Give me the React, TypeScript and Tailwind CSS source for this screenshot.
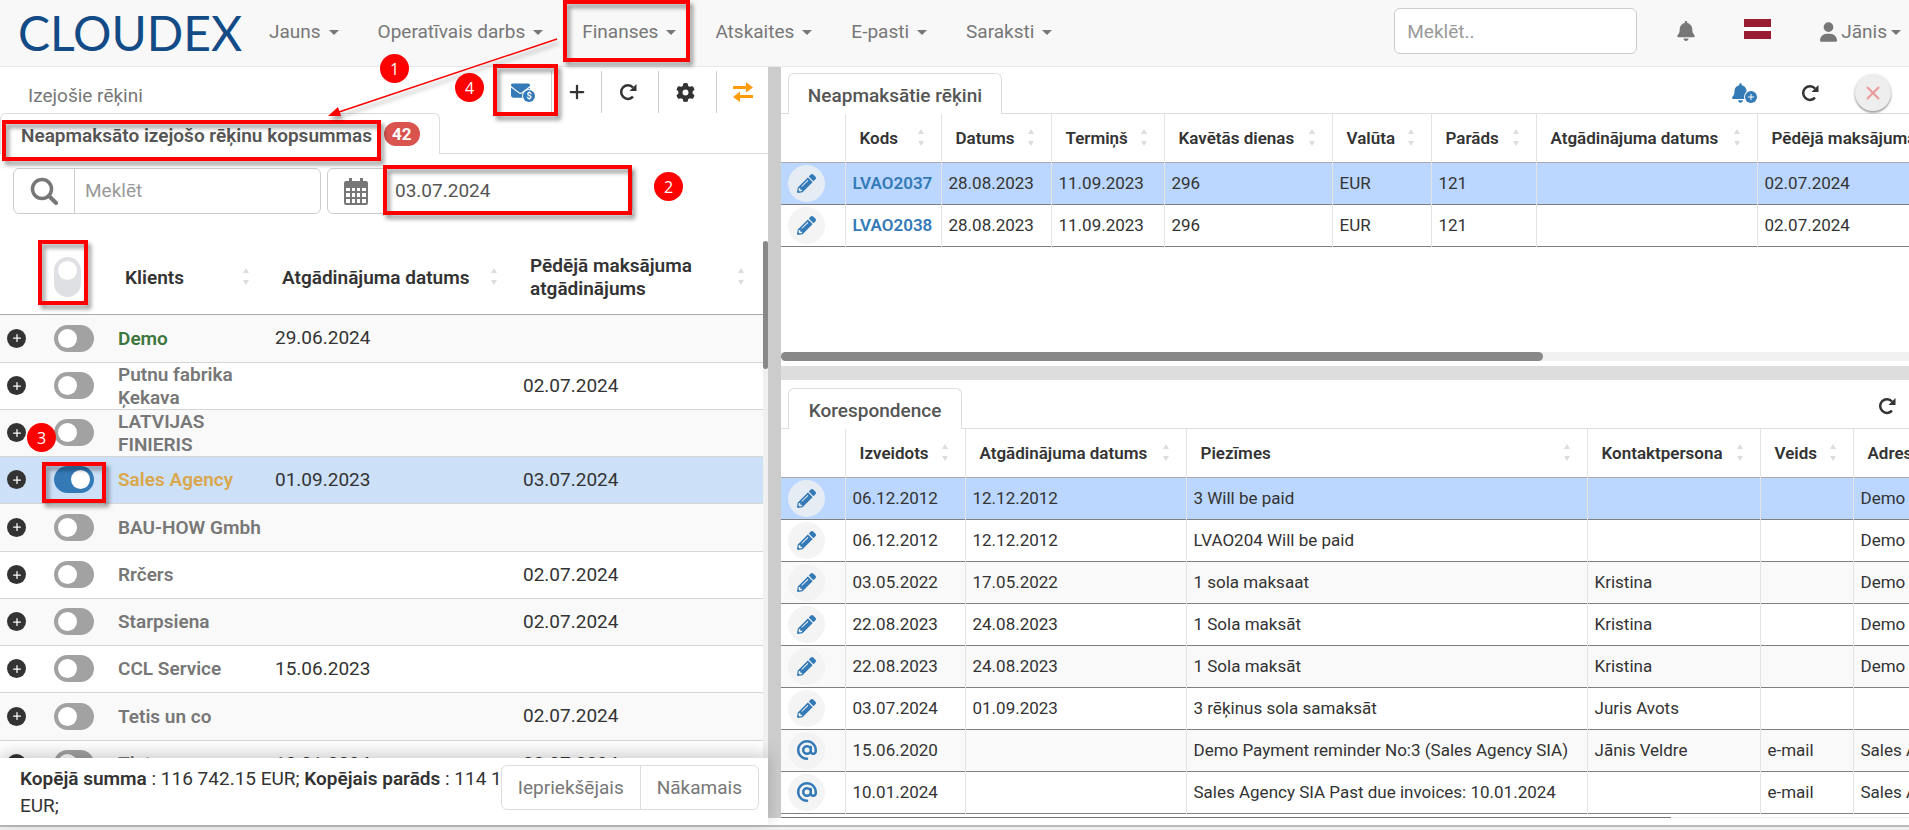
import { useState } from "react";
import { FaAt, FaBell, FaEnvelope, FaGear, FaPlus, FaUser } from "react-icons/fa6";
import { FaPencilAlt } from "react-icons/fa";
import { clsx } from "clsx";

interface Client {
  name: string;
  color: string;
  reminder: string;
  lastPayment: string;
}

interface Correspondence {
  kind: "note" | "mail";
  created: string;
  reminder: string;
  notes: string;
  contact: string;
  type: string;
  address: string;
}

const menu = ["Jauns", "Operatīvais darbs", "Finanses", "Atskaites", "E-pasti", "Saraksti"];

const clients: Client[] = [
  { name: "Demo", color: "text-[#3c763d]", reminder: "29.06.2024", lastPayment: "" },
  { name: "Putnu fabrika Ķekava", color: "text-[#777]", reminder: "", lastPayment: "02.07.2024" },
  { name: "LATVIJAS FINIERIS", color: "text-[#777]", reminder: "", lastPayment: "" },
  { name: "Sales Agency", color: "text-[#dba74c]", reminder: "01.09.2023", lastPayment: "03.07.2024" },
  { name: "BAU-HOW Gmbh", color: "text-[#777]", reminder: "", lastPayment: "" },
  { name: "Rrčers", color: "text-[#777]", reminder: "", lastPayment: "02.07.2024" },
  { name: "Starpsiena", color: "text-[#777]", reminder: "", lastPayment: "02.07.2024" },
  { name: "CCL Service", color: "text-[#777]", reminder: "15.06.2023", lastPayment: "" },
  { name: "Tetis un co", color: "text-[#777]", reminder: "", lastPayment: "02.07.2024" },
  { name: "Tieto", color: "text-[#777]", reminder: "10.01.2024", lastPayment: "02.07.2024" },
];

const invoices = [
  { code: "LVAO2037", date: "28.08.2023", due: "11.09.2023", late: "296", currency: "EUR", debt: "121", last: "02.07.2024" },
  { code: "LVAO2038", date: "28.08.2023", due: "11.09.2023", late: "296", currency: "EUR", debt: "121", last: "02.07.2024" },
];

const letters: Correspondence[] = [
  { kind: "note", created: "06.12.2012", reminder: "12.12.2012", notes: "3 Will be paid", contact: "", type: "", address: "Demo" },
  { kind: "note", created: "06.12.2012", reminder: "12.12.2012", notes: "LVAO204 Will be paid", contact: "", type: "", address: "Demo" },
  { kind: "note", created: "03.05.2022", reminder: "17.05.2022", notes: "1 sola maksaat", contact: "Kristina", type: "", address: "Demo" },
  { kind: "note", created: "22.08.2023", reminder: "24.08.2023", notes: "1 Sola maksāt", contact: "Kristina", type: "", address: "Demo" },
  { kind: "note", created: "22.08.2023", reminder: "24.08.2023", notes: "1 Sola maksāt", contact: "Kristina", type: "", address: "Demo" },
  { kind: "note", created: "03.07.2024", reminder: "01.09.2023", notes: "3 rēķinus sola samaksāt", contact: "Juris Avots", type: "", address: "" },
  { kind: "mail", created: "15.06.2020", reminder: "", notes: "Demo Payment reminder No:3 (Sales Agency SIA)", contact: "Jānis Veldre", type: "e-mail", address: "Sales Agency" },
  { kind: "mail", created: "10.01.2024", reminder: "", notes: "Sales Agency SIA Past due invoices: 10.01.2024", contact: "", type: "e-mail", address: "Sales Agency" },
];

function Caret() {
  return <span className="border-x-5 border-t-5 border-x-transparent border-t-current" />;
}

function SortArrows() {
  return (
    <svg viewBox="0 0 8 18" className="h-[18px] w-2 shrink-0 fill-[#ddd]" aria-hidden="true">
      <path d="M1 5 4 0l3 5zM1 12h6l-3 5z" />
    </svg>
  );
}

function ReloadIcon() {
  return (
    <svg viewBox="0 0 18 18" className="size-[18px] fill-none stroke-current" aria-hidden="true">
      <path d="M14 4.500A6.800 6.800 0 1 0 14 13.700" strokeWidth="2.500" />
      <path d="M17.500 1v7h-7z" className="fill-current stroke-none" />
    </svg>
  );
}

function CalendarIcon() {
  return (
    <svg viewBox="0 0 24 27" className="h-[27px] w-6 fill-current" aria-hidden="true">
      <path d="M5 0h3v3h8V0h3v3h3a2 2 0 0 1 2 2v4H0V5a2 2 0 0 1 2-2h3z" />
      <path
        fillRule="evenodd"
        d="M0 9h24v16a2 2 0 0 1-2 2H2a2 2 0 0 1-2-2zM2 10v3h4v-3zM8 10v3h3v-3zM13 10v3h3v-3zM18 10v3h4v-3zM2 15v4h4v-4zM8 15v4h3v-4zM13 15v4h3v-4zM18 15v4h4v-4zM2 21v4h4v-4zM8 21v4h3v-4zM13 21v4h3v-4zM18 21v4h4v-4z"
      />
    </svg>
  );
}

function ExchangeIcon() {
  return (
    <svg viewBox="0 0 20 20" className="h-5 w-5 fill-[#ff9c0a]" aria-hidden="true">
      <path d="M0 4h13V0l7 5.500-7 5V7H0zM20 13H7V9.500L0 15l7 5v-4h13z" />
    </svg>
  );
}

function HeadCell({ label }: { label?: string }) {
  return (
    <th scope="col" className="border-l border-[#e3e3e3] p-0 first:border-l-0">
      {label && (
        <button className="flex w-full items-center justify-between gap-1 pr-4 pl-3.5 text-left font-semibold whitespace-nowrap">
          {label}
          <SortArrows />
        </button>
      )}
    </th>
  );
}

function Cell({ children }: { children?: React.ReactNode }) {
  return <td className="overflow-hidden border-l border-[#e3e3e3] pl-[7px] whitespace-nowrap">{children}</td>;
}

function ActionCell({ kind }: { kind: "note" | "mail" }) {
  return (
    <td className="pl-[7px]">
      <button
        aria-label={kind === "note" ? "Labot" : "Atvērt e-pastu"}
        className="flex size-[37px] items-center justify-center rounded-full bg-[#f1f1f1]/80 text-[#337ab7]"
      >
        {kind === "note" ? <FaPencilAlt className="size-[19px]" /> : <FaAt className="size-5" />}
      </button>
    </td>
  );
}

function Toggle({ label, checked, onChange, vertical }: { label: string; checked: boolean; onChange: () => void; vertical?: boolean }) {
  return (
    <input
      type="checkbox"
      aria-label={label}
      checked={checked}
      onChange={onChange}
      className={clsx(
        "flex shrink-0 appearance-none rounded-full before:size-[19px] before:rounded-full before:bg-white",
        vertical
          ? "h-10 w-[27px] justify-center bg-[#dfe0e4] pt-1"
          : "h-[27px] w-10 items-center bg-[#a2a2a2] px-1 checked:justify-end checked:bg-[#337ab7]"
      )}
    />
  );
}

function Navbar() {
  return (
    <header className="flex h-[67px] shrink-0 items-center border-b border-[#e7e7e7] bg-[#f8f8f8] pr-2 pl-[18px] text-[#777]">
      <a href="#" className="w-[251px] font-['Lato'] text-5xl leading-none text-[#134b86]">CLOUDEX</a>
      <nav className="flex flex-1 gap-[39px]">
        {menu.map((item) => (
          <button key={item} className="flex items-center gap-2 pb-0.5 whitespace-nowrap">
            {item}
            <Caret />
          </button>
        ))}
      </nav>
      <input
        aria-label="Meklēt visur"
        placeholder="Meklēt.."
        className="mb-1 h-[46px] w-[243px] rounded-md border border-[#ccc] bg-white px-3 placeholder:text-[#999]"
      />
      <button aria-label="Paziņojumi" className="ml-10 flex pb-1">
        <FaBell className="h-5 w-[18px]" />
      </button>
      <button aria-label="Latviešu" className="mb-2 ml-[49px] flex h-5 w-[27px] flex-col justify-between bg-white">
        <span className="h-2 w-full bg-[#9a1c33]" />
        <span className="h-2 w-full bg-[#9a1c33]" />
      </button>
      <button className="ml-[49px] flex items-center gap-1 pb-0.5">
        <FaUser className="h-5 w-[17px]" />
        Jānis
        <Caret />
      </button>
    </header>
  );
}

function ClientPanel() {
  const [selected, setSelected] = useState<string[]>(["Sales Agency"]);
  const [date, setDate] = useState("03.07.2024");
  const [query, setQuery] = useState("");

  const toggle = (name: string) => {
    setSelected((prev) => (prev.includes(name) ? prev.filter((n) => n !== name) : [...prev, name]));
  };
  const allSelected = selected.length === clients.length;

  return (
    <section className="relative flex w-[768px] shrink-0 flex-col bg-white">
      <div className="flex h-[46px] shrink-0 items-center pl-7 text-[#777]">
        <h1 className="flex-1 pt-3">Izejošie rēķini</h1>
        <div className="flex h-[42px] items-center self-end text-[#333]">
          <button aria-label="Sūtīt atgādinājumu" className="relative mr-4 flex h-5 w-6 items-center text-[#337ab7]">
            <FaEnvelope className="mb-1 size-[19px]" />
            <span className="absolute right-0 bottom-0 flex size-3 items-center justify-center rounded-full bg-[#337ab7] text-[9px] font-bold text-white ring-1 ring-white">$</span>
          </button>
          <button aria-label="Pievienot" className="flex h-full w-[50px] items-center justify-center border-l border-[#ccc]">
            <FaPlus className="size-[18px]" />
          </button>
          <button aria-label="Pārlādēt" className="flex h-full w-[57px] items-center justify-center border-l border-[#ccc] pr-1">
            <ReloadIcon />
          </button>
          <button aria-label="Iestatījumi" className="flex h-full w-[58px] items-center justify-center border-l border-[#ccc] pr-1">
            <FaGear className="size-[19px]" />
          </button>
          <button aria-label="Mainīt skatu" className="flex h-full w-[52px] items-center justify-center border-l border-[#ccc]">
            <ExchangeIcon />
          </button>
        </div>
      </div>

      <div className="flex h-[41px] shrink-0">
        <button className="flex w-[440px] items-center gap-3 rounded-t-md border border-b-0 border-[#ddd] pt-1 pl-5 font-semibold whitespace-nowrap text-[#555]">
          Neapmaksāto izejošo rēķinu kopsummas
          <span className="mb-1 flex h-6 items-center rounded-full bg-[#d9534f] px-2 text-[17px] font-bold text-white">42</span>
        </button>
        <div className="flex-1 border-b border-[#ddd]" />
      </div>

      <div className="flex shrink-0 gap-1.5 pt-3.5 pl-[13px] text-[#555]">
        <div className="flex h-[46px] w-[308px] rounded-md border border-[#ccc]">
          <span className="flex w-[61px] items-center justify-center border-r border-[#ccc] text-[#777]">
            <svg viewBox="0 0 28 28" className="size-7 fill-none stroke-current" aria-hidden="true">
              <circle cx="12" cy="12" r="9.500" strokeWidth="3.500" />
              <path d="m19 19 7 7" strokeWidth="4" strokeLinecap="round" />
            </svg>
          </span>
          <input
            aria-label="Meklēt klientu"
            placeholder="Meklēt"
            value={query}
            onChange={(e) => setQuery(e.target.value)}
            className="min-w-0 flex-1 px-2.5 placeholder:text-[#999]"
          />
        </div>
        <div className="flex h-[46px] w-[306px] rounded-md border border-[#ccc]">
          <span className="flex w-[57px] items-center justify-center border-r border-[#ccc] text-[#777]">
            <CalendarIcon />
          </span>
          <input
            aria-label="Datums"
            value={date}
            onChange={(e) => setDate(e.target.value)}
            className="min-w-0 flex-1 px-2.5"
          />
        </div>
      </div>

      <div className="flex min-h-0 flex-1 pt-[27px]">
        <div className="min-w-0 flex-1 overflow-hidden">
          <table className="w-full table-fixed border-collapse text-left text-[#333]">
            <colgroup>
              <col className="w-[47px]" />
              <col className="w-[64px]" />
              <col className="w-[157px]" />
              <col className="w-[248px]" />
              <col />
            </colgroup>
            <thead>
              <tr className="h-[73px] border-b border-[#aaa]">
                <th scope="col" aria-label="Izvērst" />
                <th scope="col" className="pl-[7px]">
                  <Toggle
                    vertical
                    label="Atzīmēt visus"
                    checked={allSelected}
                    onChange={() => setSelected(allSelected ? [] : clients.map((c) => c.name))}
                  />
                </th>
                {["Klients", "Atgādinājuma datums", "Pēdējā maksājuma atgādinājums"].map((label) => (
                  <th key={label} scope="col" className="p-0">
                    <button className="flex w-full items-center justify-between gap-4 pr-[18px] pl-3.5 text-left leading-[23px] font-semibold">
                      {label}
                      <SortArrows />
                    </button>
                  </th>
                ))}
              </tr>
            </thead>
            <tbody>
              {clients.map((client, i) => (
                <tr
                  key={client.name}
                  className={clsx(
                    "border-b border-[#d5d5d5]",
                    i % 4 === 0 ? "h-12" : "h-[47px]",
                    selected.includes(client.name) ? "bg-[#cce0f8]" : i % 2 === 0 ? "bg-[#f9f9f9]" : "bg-white"
                  )}
                >
                  <td className="pl-[7px]">
                    <button aria-label={"Izvērst " + client.name} className="flex size-[19px] items-center justify-center rounded-full bg-[#333] text-white">
                      <FaPlus className="size-2.5" />
                    </button>
                  </td>
                  <td className="pl-[7px]">
                    <Toggle label={client.name} checked={selected.includes(client.name)} onChange={() => toggle(client.name)} />
                  </td>
                  <td className="py-0 pl-[7px]">
                    <a href="#" className={clsx("block leading-[23px] font-semibold", client.color)}>{client.name}</a>
                  </td>
                  <td className="pl-[7px]">{client.reminder}</td>
                  <td className="pl-[7px]">{client.lastPayment}</td>
                </tr>
              ))}
            </tbody>
          </table>
        </div>
        <div className="w-[5px] bg-[#f0f0f0]">
          <div className="h-32 rounded-full bg-[#888]" />
        </div>
      </div>

      <footer className="relative h-[67px] shrink-0 bg-white pt-[7px] pl-5 leading-[27px] text-[#333] shadow-[0_-4px_16px_rgba(0,0,0,0.2)]">
        <p>
          <b className="font-semibold">Kopējā summa</b> : 116 742.15 EUR; <b className="font-semibold">Kopējais parāds</b> : 114 16
          <br />
          EUR;
        </p>
        <div className="absolute top-[7px] right-[9px] flex h-[45px] rounded-md border border-[#ddd] bg-white text-[#777]">
          <button className="px-4">Iepriekšējais</button>
          <button className="border-l border-[#ddd] px-4">Nākamais</button>
        </div>
      </footer>
    </section>
  );
}

function InvoicePanel() {
  return (
    <section className="flex h-[299px] shrink-0 flex-col bg-white text-[17px] text-[#333]">
      <div className="flex h-[47px] shrink-0 pt-1.5">
        <div className="w-[7px] border-b border-[#ddd]" />
        <button className="w-[214px] rounded-t-md border border-b-0 border-[#ddd] pt-1 text-[19px] font-medium text-[#555]">Neapmaksātie rēķini</button>
        <div className="flex flex-1 items-center justify-end border-b border-[#ddd] pr-[18px]">
          <button aria-label="Pievienot atgādinājumu" className="relative mr-11 flex h-5 w-[25px] text-[#337ab7]">
            <FaBell className="h-5 w-[17px]" />
            <span className="absolute right-0 bottom-0 flex size-3 items-center justify-center rounded-full bg-[#337ab7] text-white ring-1 ring-white">
              <FaPlus className="size-2" />
            </span>
          </button>
          <button aria-label="Pārlādēt rēķinus" className="mr-9">
            <ReloadIcon />
          </button>
          <button aria-label="Aizvērt" className="flex size-9 items-center justify-center rounded-full bg-[#eee] text-[#e99a98] shadow-[0_2px_2px_rgba(0,0,0,0.3),0_0_3px_rgba(0,0,0,0.2)]">
            <svg viewBox="0 0 14 14" className="size-3.5 fill-none stroke-current stroke-2" aria-hidden="true">
              <path d="m1 1 12 12M13 1 1 13" />
            </svg>
          </button>
        </div>
      </div>
      <div className="min-h-0 flex-1 overflow-hidden">
        <table className="w-[1300px] table-fixed border-collapse text-left">
          <colgroup>
            <col className="w-16" />
            <col className="w-24" />
            <col className="w-[110px]" />
            <col className="w-[113px]" />
            <col className="w-[168px]" />
            <col className="w-[99px]" />
            <col className="w-[105px]" />
            <col className="w-[221px]" />
            <col />
          </colgroup>
          <thead>
            <tr className="h-12 border-b border-[#aaa]">
              <HeadCell />
              <HeadCell label="Kods" />
              <HeadCell label="Datums" />
              <HeadCell label="Termiņš" />
              <HeadCell label="Kavētās dienas" />
              <HeadCell label="Valūta" />
              <HeadCell label="Parāds" />
              <HeadCell label="Atgādinājuma datums" />
              <HeadCell label="Pēdējā maksājuma atgādinājums" />
            </tr>
          </thead>
          <tbody>
            {invoices.map((invoice, i) => (
              <tr key={invoice.code} className={clsx("h-[42px] border-b border-[#7f7f7f]", i === 0 ? "bg-[#bbd7ff]" : "bg-white")}>
                <ActionCell kind="note" />
                <Cell><a href="#" className="font-semibold text-[#337ab7]">{invoice.code}</a></Cell>
                <Cell>{invoice.date}</Cell>
                <Cell>{invoice.due}</Cell>
                <Cell>{invoice.late}</Cell>
                <Cell>{invoice.currency}</Cell>
                <Cell>{invoice.debt}</Cell>
                <Cell />
                <Cell>{invoice.last}</Cell>
              </tr>
            ))}
          </tbody>
        </table>
      </div>
      <div className="mb-[5px] h-[9px] shrink-0 bg-[#f0f0f0]">
        <div className="h-full w-[762px] rounded-full bg-[#888]" />
      </div>
    </section>
  );
}

function CorrespondencePanel() {
  return (
    <section className="flex min-h-0 flex-1 flex-col bg-white text-[17px] text-[#333]">
      <div className="flex h-[49px] shrink-0 pt-2">
        <div className="w-[7px] border-b border-[#ddd]" />
        <button className="w-[174px] rounded-t-md border border-b-0 border-[#ddd] pt-1 text-[19px] font-medium text-[#555]">Korespondence</button>
        <div className="flex flex-1 items-center justify-end border-b border-[#ddd] pr-[13px]">
          <button aria-label="Pārlādēt korespondenci" className="pb-1">
            <ReloadIcon />
          </button>
        </div>
      </div>
      <div className="min-h-0 flex-1 overflow-hidden">
        <table className="w-[1300px] table-fixed border-collapse text-left">
          <colgroup>
            <col className="w-16" />
            <col className="w-[120px]" />
            <col className="w-[221px]" />
            <col className="w-[401px]" />
            <col className="w-[173px]" />
            <col className="w-[93px]" />
            <col />
          </colgroup>
          <thead>
            <tr className="h-12 border-b border-[#aaa]">
              <HeadCell />
              <HeadCell label="Izveidots" />
              <HeadCell label="Atgādinājuma datums" />
              <HeadCell label="Piezīmes" />
              <HeadCell label="Kontaktpersona" />
              <HeadCell label="Veids" />
              <HeadCell label="Adresāts" />
            </tr>
          </thead>
          <tbody>
            {letters.map((letter, i) => (
              <tr
                key={i}
                className={clsx("h-[42px] border-b border-[#7f7f7f]", i === 0 ? "bg-[#bbd7ff]" : i % 2 === 0 ? "bg-[#f9f9f9]" : "bg-white")}
              >
                <ActionCell kind={letter.kind} />
                <Cell>{letter.created}</Cell>
                <Cell>{letter.reminder}</Cell>
                <Cell>{letter.notes}</Cell>
                <Cell>{letter.contact}</Cell>
                <Cell>{letter.type}</Cell>
                <Cell>{letter.address}</Cell>
              </tr>
            ))}
          </tbody>
        </table>
      </div>
      <div className="h-px shrink-0 bg-[#eee]">
        <div className="h-full w-[890px] bg-[#777]" />
      </div>
    </section>
  );
}

// Numbered walkthrough marks drawn over the page
const frames = [
  "top-0 left-[563px] h-[62px] w-[127px]",
  "top-[64px] left-[493px] h-[52px] w-[65px]",
  "top-[120px] left-[2px] h-[41px] w-[379px]",
  "top-[165px] left-[383px] h-[50px] w-[249px]",
  "top-[240px] left-[38px] h-[65px] w-[50px]",
  "top-[462px] left-[42px] h-[41px] w-[64px]",
];

const steps = [
  { n: 1, place: "top-[54px] left-[380px]" },
  { n: 2, place: "top-[172px] left-[654px]" },
  { n: 3, place: "top-[423px] left-[27px]" },
  { n: 4, place: "top-[73px] left-[455px]" },
];

function Walkthrough() {
  return (
    <div className="pointer-events-none absolute inset-0 overflow-hidden">
      {frames.map((frame) => (
        <div key={frame} className={clsx("absolute border-4 border-[#f00] drop-shadow-[3px_4px_2px_rgba(0,0,0,0.4)]", frame)} />
      ))}
      <svg className="absolute top-0 left-0 h-[130px] w-[600px] drop-shadow-[2px_4px_2px_rgba(0,0,0,0.35)]" aria-hidden="true">
        <path d="M557 39 336 113" className="stroke-[#f00] stroke-[1.500]" />
        <path d="m328 116 10-9 3 9z" className="fill-[#f00]" />
      </svg>
      {steps.map((step) => (
        <div key={step.n} className={clsx("absolute flex size-[29px] items-center justify-center rounded-full bg-[#f00] font-['Open_Sans'] text-base text-white", step.place)}>
          {step.n}
        </div>
      ))}
    </div>
  );
}

export default function App() {
  return (
    <div className="relative flex h-screen flex-col overflow-hidden bg-white font-['Roboto',sans-serif] text-[19px] leading-6">
      <Navbar />
      <main className="flex min-h-0 flex-1">
        <ClientPanel />
        <div className="mb-[7px] w-[13px] shrink-0 bg-[#ccc]" />
        <div className="mb-[7px] flex min-w-0 flex-1 flex-col">
          <InvoicePanel />
          <div className="h-3.5 shrink-0 bg-[#ddd]" />
          <CorrespondencePanel />
        </div>
      </main>
      <div className="h-[5px] shrink-0 border-t-2 border-[#bbb] bg-[#f0f0f0]" />
      <Walkthrough />
    </div>
  );
}
